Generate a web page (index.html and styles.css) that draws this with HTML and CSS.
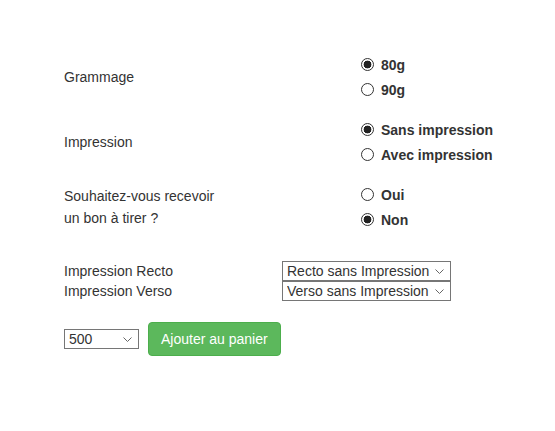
FILE: index.html
```html
<!DOCTYPE html>
<html lang="fr">
<head>
    <meta charset="UTF-8">
    <meta name="viewport" content="width=device-width, initial-scale=1.0">
    <title>Options d'impression</title>
    <link rel="stylesheet" href="styles.css">
</head>
<body>
    <form class="product-form">
        <div class="option-group">
            <div class="group-label">Grammage</div>
            <div class="choices">
                <label class="choice"><input type="radio" name="grammage" checked> 80g</label>
                <label class="choice"><input type="radio" name="grammage"> 90g</label>
            </div>
        </div>

        <div class="option-group">
            <div class="group-label">Impression</div>
            <div class="choices">
                <label class="choice"><input type="radio" name="impression" checked> Sans impression</label>
                <label class="choice"><input type="radio" name="impression"> Avec impression</label>
            </div>
        </div>

        <div class="option-group">
            <div class="group-label">Souhaitez-vous recevoir<br>un bon à tirer ?</div>
            <div class="choices">
                <label class="choice"><input type="radio" name="bat"> Oui</label>
                <label class="choice"><input type="radio" name="bat" checked> Non</label>
            </div>
        </div>

        <div class="sides">
            <div class="side-row">
                <span class="side-label">Impression Recto</span>
                <select class="side-select">
                    <option>Recto sans Impression</option>
                    <option>Recto avec Impression</option>
                </select>
            </div>
            <div class="side-row">
                <span class="side-label">Impression Verso</span>
                <select class="side-select">
                    <option>Verso sans Impression</option>
                    <option>Verso avec Impression</option>
                </select>
            </div>
        </div>

        <div class="cart-row">
            <select class="qty-select">
                <option>500</option>
                <option>1000</option>
                <option>2000</option>
            </select>
            <button type="button" class="btn-cart">Ajouter au panier</button>
        </div>
    </form>
</body>
</html>
```

FILE: styles.css
```css
body {
    margin: 0;
    font-family: "Liberation Sans", Arial, Helvetica, sans-serif;
    font-size: 14px;
    color: #333;
    background: #fff;
}
.product-form {
    padding: 52px 0 0 64px;
}
.option-group {
    display: flex;
    align-items: center;
    margin-bottom: 15px;
}
.group-label {
    width: 297px;
    line-height: 22px;
}
.choices {
    display: flex;
    flex-direction: column;
}
.choice {
    display: flex;
    align-items: center;
    height: 25px;
    font-weight: bold;
    gap: 7px;
}
.choice input {
    appearance: none;
    margin: 0;
    width: 13px;
    height: 13px;
    border: 1px solid #333;
    border-radius: 50%;
    background: #fff;
}
.choice input:checked {
    background: radial-gradient(circle, #222 0 3.6px, #fff 4.2px);
}
.sides {
    margin-top: 29px;
}
.side-row {
    display: flex;
    align-items: center;
    height: 20px;
}
.side-label {
    width: 218px;
}
.side-select,
.qty-select {
    appearance: none;
    height: 20px;
    font-family: inherit;
    font-size: 14px;
    color: #333;
    border: 1px solid #767676;
    border-radius: 0;
    padding: 0 18px 0 4px;
    background: #fff url("data:image/svg+xml,%3Csvg xmlns='http://www.w3.org/2000/svg' width='9' height='5' viewBox='0 0 9 5'%3E%3Cpath d='M0.5 0.5 L4.5 4.5 L8.5 0.5' fill='none' stroke='%23666' stroke-width='1'/%3E%3C/svg%3E") no-repeat right 6px center;
}
.side-select {
    width: 169px;
}
.qty-select {
    width: 75px;
}
.cart-row {
    display: flex;
    align-items: center;
    gap: 9px;
    margin-top: 21px;
}
.btn-cart {
    font-family: inherit;
    font-size: 14px;
    line-height: 20px;
    color: #fff;
    background: #5cb85c;
    border: 1px solid #4cae4c;
    border-radius: 4px;
    padding: 6px 12px;
    cursor: pointer;
}
```
